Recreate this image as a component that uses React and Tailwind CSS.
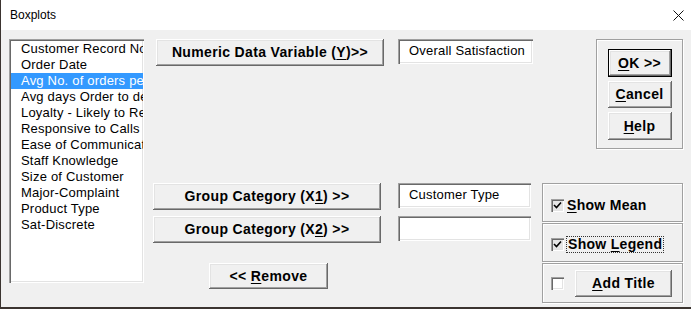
import React from "react";

const font = "font-['Liberation_Sans',Arial,sans-serif]";
const raised =
  "bg-[#f0f0f0] shadow-[inset_-1px_-1px_0_#696969,inset_1px_1px_0_#ffffff,inset_-2px_-2px_0_#a0a0a0,inset_2px_2px_0_#e3e3e3]";
const sunken =
  "bg-white shadow-[inset_1px_1px_0_#a0a0a0,inset_2px_2px_0_#696969,inset_-1px_-1px_0_#ffffff,inset_-2px_-2px_0_#e3e3e3]";
const etched = "border border-[#a0a0a0] shadow-[inset_1px_1px_0_#ffffff,1px_1px_0_#ffffff]";

function Btn({ className = "", children }) {
  return (
    <div
      className={`${raised} flex items-center justify-center font-bold text-[14px] tracking-[0.35px] text-black whitespace-nowrap ${className}`}
    >
      {children}
    </div>
  );
}

function Check({ checked }) {
  return (
    <div
      className={`w-[13px] h-[13px] shrink-0 flex items-center justify-center ${
        checked ? "bg-[#e6e6e6]" : "bg-white"
      } shadow-[inset_1px_1px_0_#a0a0a0,inset_2px_2px_0_#696969,inset_-1px_-1px_0_#ffffff,inset_-2px_-2px_0_#e3e3e3]`}
    >
      {checked && (
        <svg width="9" height="9" viewBox="0 0 9 9">
          <path d="M1 4 L3.5 6.5 L8 1.5" stroke="#000" strokeWidth="1.6" fill="none" />
        </svg>
      )}
    </div>
  );
}

const items = [
  "Customer Record No.",
  "Order Date",
  "Avg No. of orders per month",
  "Avg days Order to delivery",
  "Loyalty - Likely to Recommend",
  "Responsive to Calls",
  "Ease of Communication",
  "Staff Knowledge",
  "Size of Customer",
  "Major-Complaint",
  "Product Type",
  "Sat-Discrete",
];

export default function App() {
  return (
    <div className={`${font} w-[691px] h-[309px] bg-[#3b3430] overflow-hidden`}>
      <div className="ml-[1px] w-[690px] h-[307px] flex flex-col bg-[#f0f0f0]">
        {/* Title bar */}
        <div className="h-[30px] bg-white flex items-center justify-between pl-[9px] pr-[7px] shrink-0">
          <span className="text-[12px] text-black leading-none">Boxplots</span>
          <svg width="11" height="11" viewBox="0 0 11 11">
            <path d="M0.5 0.5 L10.5 10.5 M10.5 0.5 L0.5 10.5" stroke="#111" strokeWidth="1" />
          </svg>
        </div>
        {/* Body */}
        <div className="flex pt-[9px] pl-[8px]">
          {/* List box */}
          <div className={`${sunken} w-[135px] h-[244px] pt-[2px] pl-[2px] pr-[1px] overflow-hidden shrink-0`}>
            {items.map((t, i) => (
              <div
                key={t}
                className={`h-[16px] leading-[16px] text-[13px] tracking-[0.2px] whitespace-nowrap overflow-hidden pl-[10px] ${
                  i === 2 ? "bg-[#3399ff] text-white" : "text-black"
                }`}
              >
                {t}
              </div>
            ))}
          </div>

          {/* Middle */}
          <div className="ml-[9px] w-[380px] shrink-0 flex flex-col">
            <div className="flex pl-[3px]">
              <Btn className="w-[228px] h-[27px]">
                Numeric Data Variable (<span className="underline underline-offset-2">Y</span>)&gt;&gt;
              </Btn>
              <div className={`${sunken} ml-[14px] w-[135px] h-[25px] pl-[11px] pt-[4px] text-[13px] tracking-[0.2px] leading-[15px] whitespace-nowrap`}>
                Overall Satisfaction
              </div>
            </div>
            <div className="flex mt-[117px]">
              <Btn className="w-[228px] h-[27px]">
                Group Category (X<span className="underline underline-offset-2">1</span>) &gt;&gt;
              </Btn>
              <div className={`${sunken} ml-[17px] w-[133px] h-[25px] pl-[11px] pt-[4px] text-[13px] tracking-[0.2px] leading-[15px] whitespace-nowrap`}>
                Customer Type
              </div>
            </div>
            <div className="flex mt-[6px]">
              <Btn className="w-[228px] h-[27px]">
                Group Category (X<span className="underline underline-offset-2">2</span>) &gt;&gt;
              </Btn>
              <div className={`${sunken} ml-[17px] w-[133px] h-[25px]`} />
            </div>
            <Btn className="mt-[20px] ml-[56px] w-[119px] h-[26px]">
              &lt;&lt;&nbsp;<span className="underline underline-offset-2">R</span>emove
            </Btn>
          </div>

          {/* Right */}
          <div className="ml-[9px] w-[141px] shrink-0 flex flex-col">
            <div className={`${etched} ml-[54px] w-[87px] h-[110px] flex flex-col items-center pt-[9px] gap-[4px]`}>
              <div className="w-[64px] h-[28px] border border-black">
                <Btn className="w-full h-full">
                  <span className="underline underline-offset-2">O</span>K &gt;&gt;
                </Btn>
              </div>
              <Btn className="w-[64px] h-[27px]">
                <span className="underline underline-offset-2">C</span>ancel
              </Btn>
              <Btn className="w-[64px] h-[28px]">
                <span className="underline underline-offset-2">H</span>elp
              </Btn>
            </div>

            <div className="mt-[34px] w-[141px] flex flex-col gap-[1px]">
              <div className={`${etched} w-[141px] h-[39px] flex items-center pl-[8px] pt-[6px] overflow-hidden`}>
                <Check checked />
                <span className="ml-[3px] text-[14px] tracking-[0.3px] font-bold whitespace-nowrap">
                  <span className="underline underline-offset-2">S</span>how Mean
                </span>
              </div>
              <div className={`${etched} w-[141px] h-[39px] flex items-center pl-[8px] pt-[4px] overflow-hidden`}>
                <Check checked />
                <span className="ml-[2px] text-[14px] tracking-[0.3px] font-bold border border-dotted border-[#333] px-[1px] leading-[15px] whitespace-nowrap">
                  Show <span className="underline underline-offset-2">L</span>egend
                </span>
              </div>
              <div className={`${etched} w-[141px] h-[40px] flex items-center pl-[8px] overflow-hidden`}>
                <Check />
                <Btn className="ml-[11px] w-[97px] h-[27px]">
                  <span className="underline underline-offset-2">A</span>dd Title
                </Btn>
              </div>
            </div>
          </div>
        </div>
      </div>
    </div>
  );
}
